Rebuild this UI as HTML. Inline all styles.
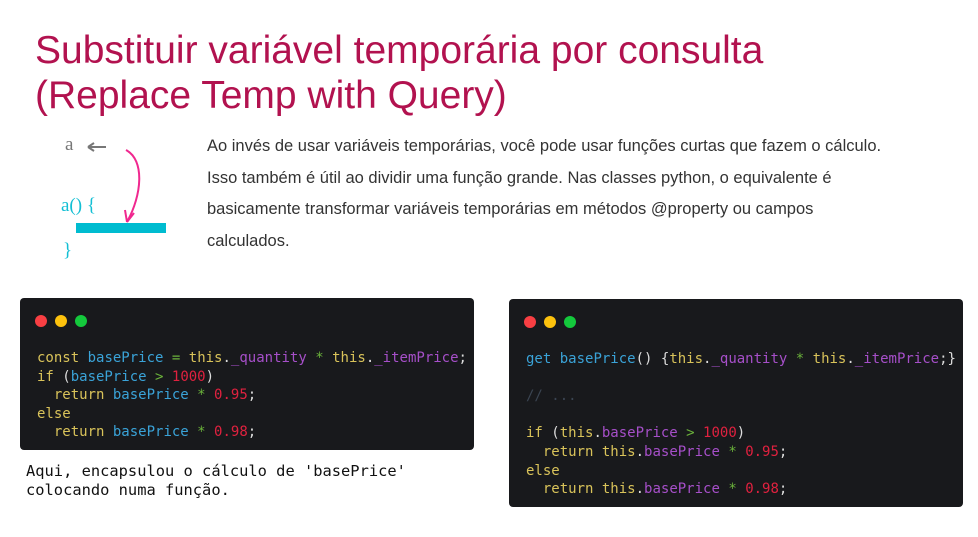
<!DOCTYPE html>
<html><head><meta charset="utf-8"><style>
body{margin:0;width:978px;height:537px;background:#fff;position:relative;overflow:hidden;font-family:"Liberation Sans",sans-serif}
.t{position:absolute;left:35px;top:28px;font-size:39px;line-height:45px;color:#b2124f}
.p{position:absolute;left:207px;top:131px;width:685px;font-size:16.5px;line-height:31.5px;color:#333}
.box{position:absolute;background:#18191c;border-radius:4px}
.dots{position:absolute;left:15px;top:16px}
.dots span{display:inline-block;width:12px;height:12px;border-radius:50%;margin-right:8px}
pre{position:absolute;margin:0;font-family:"DejaVu Sans Mono",monospace;font-size:14px;line-height:18.6px;color:#ddd}
.k{color:#d9c35a}.b{color:#3aa3d8}.v{color:#a64fc9}.g{color:#6bb33b}.n{color:#e0213f}.c{color:#3b4552}
.cap{position:absolute;left:26px;top:462px;font-family:"DejaVu Sans Mono",monospace;font-size:15.4px;line-height:19px;color:#111;margin:0}
</style></head><body>
<div class="t">Substituir variável temporária por consulta<br>(Replace Temp with Query)</div>
<svg style="position:absolute;left:50px;top:125px" width="140" height="140">
<text x="15" y="25" font-family="Liberation Serif" font-size="19" fill="#777">a</text>
<path d="M38 22H56M38 22l6-4M38 22l6 4" stroke="#777" stroke-width="2" fill="none"/>
<path d="M76 25C95 35 92 70 77 97" stroke="#f0288f" stroke-width="2" fill="none"/>
<path d="M77 97l-2-12M77 97l7-9" stroke="#f0288f" stroke-width="2" fill="none"/>
<text x="11" y="86" font-family="Liberation Serif" font-size="19" fill="#13bfd4">a() {</text>
<rect x="26" y="98" width="90" height="10" fill="#00bcd0"/>
<text x="13" y="131" font-family="Liberation Serif" font-size="19" fill="#13bfd4">}</text>
</svg>
<div class="p">Ao invés de usar variáveis temporárias, você pode usar funções curtas que fazem o cálculo. Isso também é útil ao dividir uma função grande. Nas classes python, o equivalente é basicamente transformar variáveis temporárias em métodos @property ou campos calculados.</div>
<div class="box" style="left:20px;top:298px;width:454px;height:152px">
<div class="dots"><span style="background:#f83f43"></span><span style="background:#fdc20d"></span><span style="background:#14c93c"></span></div>
<pre style="left:17px;top:51px"><span class="k">const</span> <span class="b">basePrice</span> <span class="g">=</span> <span class="k">this</span>.<span class="v">_quantity</span> <span class="g">*</span> <span class="k">this</span>.<span class="v">_itemPrice</span>;
<span class="k">if</span> (<span class="b">basePrice</span> <span class="g">&gt;</span> <span class="n">1000</span>)
  <span class="k">return</span> <span class="b">basePrice</span> <span class="g">*</span> <span class="n">0.95</span>;
<span class="k">else</span>
  <span class="k">return</span> <span class="b">basePrice</span> <span class="g">*</span> <span class="n">0.98</span>;</pre>
</div>
<pre class="cap">Aqui, encapsulou o cálculo de 'basePrice'
colocando numa função.</pre>
<div class="box" style="left:509px;top:299px;width:454px;height:208px">
<div class="dots"><span style="background:#f83f43"></span><span style="background:#fdc20d"></span><span style="background:#14c93c"></span></div>
<pre style="left:17px;top:51px"><span class="b">get</span> <span class="b">basePrice</span>() {<span class="k">this</span>.<span class="v">_quantity</span> <span class="g">*</span> <span class="k">this</span>.<span class="v">_itemPrice</span>;}

<span class="c">// ...</span>

<span class="k">if</span> (<span class="k">this</span>.<span class="v">basePrice</span> <span class="g">&gt;</span> <span class="n">1000</span>)
  <span class="k">return</span> <span class="k">this</span>.<span class="v">basePrice</span> <span class="g">*</span> <span class="n">0.95</span>;
<span class="k">else</span>
  <span class="k">return</span> <span class="k">this</span>.<span class="v">basePrice</span> <span class="g">*</span> <span class="n">0.98</span>;</pre>
</div>
</body></html>
